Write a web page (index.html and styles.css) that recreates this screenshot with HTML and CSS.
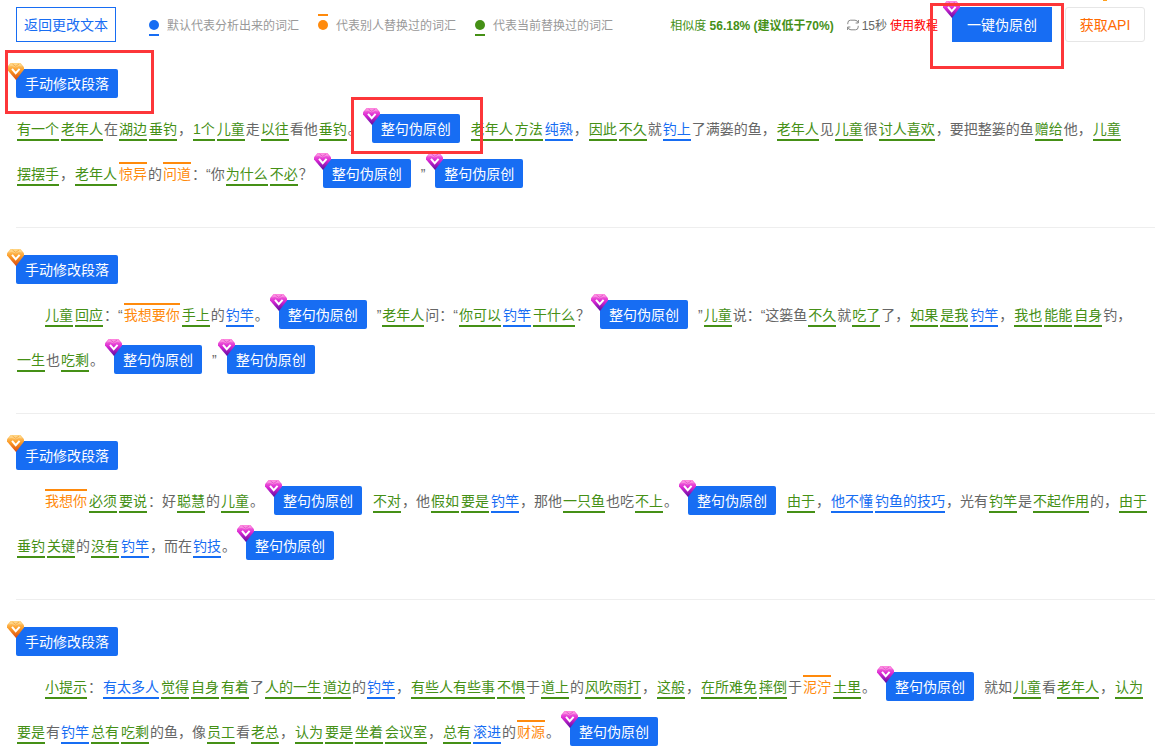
FILE: index.html
```
<!DOCTYPE html>
<html lang="zh-CN">
<head>
  <meta charset="UTF-8" />
  <meta name="viewport" content="width=device-width, initial-scale=1.0" />
  <title>一键伪原创</title>
  <link rel="stylesheet" href="styles.css">
</head>
<body>
  <svg class="defs" aria-hidden="true">
    <defs>
      <linearGradient id="goldFill" x1="0" y1="0" x2="0" y2="1">
        <stop offset="0" stop-color="#ffd27a" />
        <stop offset="0.45" stop-color="#fb9a26" />
        <stop offset="1" stop-color="#d9480f" />
      </linearGradient>
      <linearGradient id="pinkFill" x1="0" y1="0" x2="0" y2="1">
        <stop offset="0" stop-color="#ff7adb" />
        <stop offset="0.45" stop-color="#d826d2" />
        <stop offset="1" stop-color="#5a0aa0" />
      </linearGradient>
      <symbol id="gold" viewBox="0 0 17 17">
        <path d="M3.5 0h10L17 4.2v2.3L9 17 0 6.5V4.2z" fill="url(#goldFill)" />
        <path d="M4 .6h9l2.4 2.8-3.4-.4-3.3 1.4L5 3l-3.4.4z" fill="#ffe3a6" opacity="0.5" />
        <path d="M5.5 1l3.2 2.4L12 1" fill="none" stroke="#f2a33c" stroke-width="0.8" />
        <path d="M5 5.8l3.7 4.4 3.9-4.4" fill="none" stroke="#fff" stroke-width="2" />
      </symbol>
      <symbol id="pink" viewBox="0 0 17 17">
        <path d="M3.5 0h10L17 4.2v2.3L9 17 0 6.5V4.2z" fill="url(#pinkFill)" />
        <path d="M4 .6h9l2.4 2.8-3.4-.4-3.3 1.4L5 3l-3.4.4z" fill="#ffb3ea" opacity="0.5" />
        <path d="M5.5 1l3.2 2.4L12 1" fill="none" stroke="#e04cc4" stroke-width="0.8" />
        <path d="M5 5.8l3.7 4.4 3.9-4.4" fill="none" stroke="#fff" stroke-width="2" />
      </symbol>
    </defs>
  </svg>

  <header class="toolbar">
    <button class="back" type="button">返回更改文本</button>
    <ul class="legend">
      <li><i class="dot dot-def"></i>默认代表分析出来的词汇</li>
      <li><i class="dot dot-rep"></i>代表别人替换过的词汇</li>
      <li><i class="dot dot-cur"></i>代表当前替换过的词汇</li>
    </ul>
    <div class="status">
      <span class="score">相似度 <b>56.18% (建议低于70%)</b></span>
      <svg class="refresh" viewBox="0 0 12 12" aria-hidden="true">
        <path d="M.8 5.2V4Q.8 1.2 3.6 1.2H8Q10.4 1.2 11 3.6M11.4 1V4H8.6M11.2 6.8V8Q11.2 10.8 8.4 10.8H4Q1.6 10.8 1 8.4M.6 11V8H3.4" fill="none" stroke="#888" />
      </svg>
      <span>15秒</span>
      <a class="help" href="#">使用教程</a>
    </div>
    <button class="all marked mark-all" type="button"><svg class="gem"><use href="#pink" /></svg>一键伪原创</button>
    <a class="api" href="#">获取API</a>
  </header>

  <main>
    <section class="block">
      <button class="btn marked mark-para" type="button"><svg class="gem"><use href="#gold" /></svg>手动修改段落</button>
      <p class="text"><span class="cur">有一个</span><span class="cur">老年人</span>在<span class="cur">湖边</span><span class="cur">垂钓</span>，<span class="cur">1个</span><span class="cur">儿童</span>走<span class="cur">以往</span>看他<span class="cur">垂钓</span>。<button class="btn marked mark-sent" type="button"><svg class="gem"><use href="#pink" /></svg>整句伪原创</button><span class="cur">老年人</span><span class="cur">方法</span><span class="def">纯熟</span>，<span class="cur">因此</span><span class="cur">不久</span>就<span class="def">钓上</span>了满篓的鱼，<span class="cur">老年人</span>见<span class="cur">儿童</span>很<span class="cur">讨人喜欢</span>，要把整篓的鱼<span class="cur">赠给</span>他，<span class="cur">儿童</span><span class="cur">摆摆手</span>，<span class="cur">老年人</span><span class="rep">惊异</span>的<span class="rep">问道</span>：“你<span class="cur">为什么</span><span class="cur">不必</span>？<button class="btn" type="button"><svg class="gem"><use href="#pink" /></svg>整句伪原创</button>”<button class="btn" type="button"><svg class="gem"><use href="#pink" /></svg>整句伪原创</button></p>
    </section>

    <section class="block">
      <button class="btn" type="button"><svg class="gem"><use href="#gold" /></svg>手动修改段落</button>
      <p class="text indent"><span class="cur">儿童</span><span class="cur">回应</span>：“<span class="rep">我想要你</span><span class="cur">手上</span>的<span class="def">钓竿</span>。<button class="btn" type="button"><svg class="gem"><use href="#pink" /></svg>整句伪原创</button>”<span class="cur">老年人</span>问：“<span class="cur">你可以</span><span class="def">钓竿</span><span class="cur">干什么</span>？<button class="btn" type="button"><svg class="gem"><use href="#pink" /></svg>整句伪原创</button>”<span class="cur">儿童</span>说：“这篓鱼<span class="cur">不久</span>就<span class="cur">吃了</span>了，<span class="cur">如果</span><span class="cur">是我</span><span class="def">钓竿</span>，<span class="cur">我也</span><span class="cur">能能</span><span class="cur">自身</span>钓，<span class="cur">一生</span>也<span class="cur">吃剩</span>。<button class="btn" type="button"><svg class="gem"><use href="#pink" /></svg>整句伪原创</button>”<button class="btn" type="button"><svg class="gem"><use href="#pink" /></svg>整句伪原创</button></p>
    </section>

    <section class="block">
      <button class="btn" type="button"><svg class="gem"><use href="#gold" /></svg>手动修改段落</button>
      <p class="text indent"><span class="rep">我想你</span><span class="cur">必须</span><span class="cur">要说</span>：好<span class="cur">聪慧</span>的<span class="cur">儿童</span>。<button class="btn" type="button"><svg class="gem"><use href="#pink" /></svg>整句伪原创</button><span class="cur">不对</span>，他<span class="cur">假如</span><span class="cur">要是</span><span class="def">钓竿</span>，那他<span class="cur">一只鱼</span>也吃<span class="cur">不上</span>。<button class="btn" type="button"><svg class="gem"><use href="#pink" /></svg>整句伪原创</button><span class="cur">由于</span>，<span class="def">他不懂</span><span class="def">钓鱼的技巧</span>，光有<span class="cur">钓竿</span>是<span class="cur">不起作用</span>的，<span class="cur">由于</span><span class="cur">垂钓</span><span class="cur">关键</span>的<span class="cur">没有</span><span class="def">钓竿</span>，而在<span class="def">钓技</span>。<button class="btn" type="button"><svg class="gem"><use href="#pink" /></svg>整句伪原创</button></p>
    </section>

    <section class="block">
      <button class="btn" type="button"><svg class="gem"><use href="#gold" /></svg>手动修改段落</button>
      <p class="text indent"><span class="cur">小提示</span>：<span class="def">有太多人</span><span class="cur">觉得</span><span class="cur">自身</span><span class="cur">有着</span>了<span class="cur">人的一生</span><span class="cur">道边</span>的<span class="def">钓竿</span>，<span class="cur">有些人有些事</span><span class="cur">不惧</span>于<span class="cur">道上</span>的<span class="cur">风吹雨打</span>，<span class="cur">这般</span>，<span class="cur">在所难免</span><span class="cur">摔倒</span>于<span class="rep">泥泞</span><span class="cur">土里</span>。<button class="btn" type="button"><svg class="gem"><use href="#pink" /></svg>整句伪原创</button>就如<span class="cur">儿童</span>看<span class="cur">老年人</span>，<span class="cur">认为</span><span class="cur">要是</span>有<span class="def">钓竿</span><span class="cur">总有</span><span class="cur">吃剩</span>的鱼，像<span class="cur">员工</span>看<span class="cur">老总</span>，<span class="cur">认为</span><span class="cur">要是</span><span class="cur">坐着</span><span class="cur">会议室</span>，<span class="cur">总有</span><span class="def">滚进</span>的<span class="rep">财源</span>。<button class="btn" type="button"><svg class="gem"><use href="#pink" /></svg>整句伪原创</button></p>
    </section>
  </main>
</body>
</html>
```

FILE: styles.css
```
*,
*::before,
*::after {
  box-sizing: border-box;
}
body {
  margin: 0;
  padding-left: 16px;
  background: #fff;
  color: #666;
  font-family: "Liberation Sans", "Noto Sans CJK SC", sans-serif;
  font-size: 14px;
  text-spacing-trim: space-all;
  overflow-x: hidden;
}
button {
  font: inherit;
  cursor: pointer;
}
a {
  text-decoration: none;
}
.defs {
  position: absolute;
  width: 0;
  height: 0;
}

/* top bar */
.toolbar {
  display: flex;
  align-items: center;
  padding: 7px 10px 0 0;
  font-size: 12px;
  white-space: nowrap;
}
.back {
  height: 35px;
  padding: 0 7px 2px;
  border: 1px solid #176df3;
  background: #fff;
  color: #176df3;
  font-size: 14px;
}
.legend {
  display: flex;
  gap: 19px;
  margin: 0 0 0 33px;
  padding: 0;
  list-style: none;
  color: #999;
}
.legend li {
  display: flex;
  align-items: center;
  gap: 8px;
}
.dot {
  display: flex;
  align-items: center;
  width: 10px;
  height: 22px;
  border-top: 2px solid transparent;
  border-bottom: 2px solid transparent;
}
.dot::before {
  content: "";
  width: 10px;
  height: 10px;
  border-radius: 50%;
  background: currentColor;
}
.dot-def {
  color: #176df3;
  border-bottom-color: #176df3;
}
.dot-rep {
  color: #ff8a0c;
  border-top-color: #ff8a0c;
}
.dot-cur {
  color: #459016;
  border-bottom-color: #459016;
}
.status {
  display: flex;
  align-items: center;
  gap: 3px;
  margin-left: auto;
}
.score {
  margin-right: 10px;
  color: #459016;
}
.refresh {
  width: 12px;
  height: 12px;
}
.help {
  color: #f00;
}
.all {
  position: relative;
  width: 100px;
  height: 35px;
  margin-left: 14px;
  padding: 0 0 2px;
  border: 0;
  background: #176df3;
  color: #fff;
  font-size: 14px;
}
.api {
  position: relative;
  width: 80px;
  margin-left: 13px;
  padding-top: 2px;
  border: 1px solid #e6e6e6;
  border-radius: 3px;
  color: #ff6a00;
  font-size: 14px;
  line-height: 31px;
  text-align: center;
}
/* tip of the arrow pointing at the API link */
.api::before {
  content: "";
  position: absolute;
  top: -8px;
  left: 37px;
  width: 4px;
  height: 1px;
  background: #ffa01e;
}

/* paragraphs */
.block {
  padding: 27px 0 30px;
  border-bottom: 1px solid #eee;
}
.block:last-child {
  padding-bottom: 0;
  border-bottom: 0;
}
.btn {
  position: relative;
  display: inline-block;
  height: 29px;
  padding: 2px 9px 0;
  border: 0;
  border-radius: 2px;
  background: #176df3;
  color: #fff;
  line-height: 27px;
  text-indent: 0;
}
.block > .btn {
  display: block;
}
.text {
  margin: 9px 0 0;
  line-height: 45px;
}
.text .btn {
  margin: 0 10px;
}
.indent {
  text-indent: 28px;
}
.gem {
  position: absolute;
  top: -6px;
  left: -9px;
  width: 17px;
  height: 17px;
}

/* words: analysed, replaced by others, replaced now */
.def,
.rep,
.cur {
  display: inline-block;
  margin: 0 1px;
  border-top: 2px solid transparent;
  border-bottom: 2px solid transparent;
  line-height: 20px;
  text-indent: 0;
  cursor: pointer;
}
.def {
  color: #176df3;
  border-bottom-color: #176df3;
}
.rep {
  color: #ff8a0c;
  border-top-color: #ff8a0c;
}
.cur {
  color: #459016;
  border-bottom-color: #459016;
}

/* red frames round the paid buttons */
.marked::after {
  content: "";
  position: absolute;
  z-index: 2;
  border: 3px solid #fd3639;
  pointer-events: none;
}
.mark-para::after {
  top: -19px;
  left: -11px;
  width: 149px;
  height: 64px;
}
.mark-sent::after {
  top: -17px;
  left: -21px;
  width: 132px;
  height: 57px;
}
.mark-all::after {
  top: -4px;
  left: -22px;
  width: 134px;
  height: 66px;
}
```
